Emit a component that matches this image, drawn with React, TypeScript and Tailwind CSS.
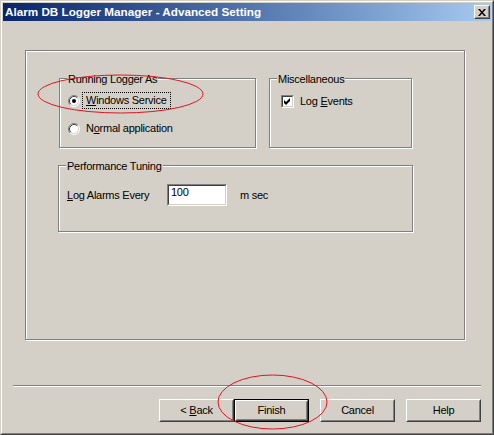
import React from 'react';

function Radio({ checked }: { checked?: boolean }) {
  return (
    <svg width="12" height="12" viewBox="0 0 12 12" className="shrink-0">
      <circle cx="6" cy="6" r="5" fill="#fff" />
      <path d="M2.11 9.89 A5.5 5.5 0 0 1 9.89 2.11" fill="none" stroke="#808080" />
      <path d="M9.89 2.11 A5.5 5.5 0 0 1 2.11 9.89" fill="none" stroke="#fff" />
      <path d="M2.82 9.18 A4.5 4.5 0 0 1 9.18 2.82" fill="none" stroke="#404040" />
      <path d="M9.18 2.82 A4.5 4.5 0 0 1 2.82 9.18" fill="none" stroke="#d4d0c8" />
      {checked && <circle cx="6" cy="6" r="2" fill="#000" />}
    </svg>
  );
}

function Checkbox() {
  return (
    <div className="w-[13px] h-[13px] shrink-0 border border-t-[#808080] border-l-[#808080] border-r-white border-b-white">
      <div className="h-full border border-t-[#404040] border-l-[#404040] border-r-[#d4d0c8] border-b-[#d4d0c8] bg-white">
        <svg width="9" height="9" viewBox="0 0 9 9">
          <polygon points="1,3 3,5 7,1 7,4 3,8 1,6" fill="#000" />
        </svg>
      </div>
    </div>
  );
}

function Group({ title, className, children }: { title: string; className: string; children?: React.ReactNode }) {
  return (
    <div className={`relative border border-[#808080] shadow-[inset_1px_1px_0_#fff,1px_1px_0_#fff] ${className}`}>
      <span className="absolute left-[7px] top-[-6px] px-px bg-[#d4d0c8] leading-[13px]">{title}</span>
      {children}
    </div>
  );
}

function Button({ children, isDefault }: { children: React.ReactNode; isDefault?: boolean }) {
  if (isDefault) {
    return (
      <div className="w-[75px] h-[23px] border border-black">
        <div className="h-full border border-t-white border-l-white border-r-[#404040] border-b-[#404040]">
          <div className="h-full flex items-center justify-center border border-t-[#d4d0c8] border-l-[#d4d0c8] border-r-[#808080] border-b-[#808080]">
            {children}
          </div>
        </div>
      </div>
    );
  }
  return (
    <div className="w-[75px] h-[23px] border border-t-white border-l-white border-r-[#404040] border-b-[#404040]">
      <div className="h-full flex items-center justify-center border border-t-[#d4d0c8] border-l-[#d4d0c8] border-r-[#808080] border-b-[#808080]">
        {children}
      </div>
    </div>
  );
}

export default function App() {
  return (
    <div className="relative w-[494px] h-[435px] bg-[#d4d0c8] text-black text-[11px] tracking-[-0.25px] font-['Liberation_Sans',Arial,sans-serif]">
      <div className="h-full border border-t-[#d4d0c8] border-l-[#d4d0c8] border-r-[#404040] border-b-[#404040]">
        <div className="h-full flex flex-col p-px border border-t-white border-l-white border-r-[#808080] border-b-[#808080]">
          {/* title bar */}
          <div className="h-[18px] flex items-center justify-between pl-[2px] pr-[1px] bg-linear-to-r from-[#0a246a] to-[#a6caf0]">
            <span className="text-white font-bold text-[11.7px] tracking-normal leading-none">
              Alarm DB Logger Manager - Advanced Setting
            </span>
            <div className="w-[16px] h-[14px] border border-t-white border-l-white border-r-[#404040] border-b-[#404040] bg-[#d4d0c8]">
              <div className="h-full flex items-center justify-center border border-t-[#d4d0c8] border-l-[#d4d0c8] border-r-[#808080] border-b-[#808080]">
                <svg width="8" height="7" viewBox="0 0 8 7">
                  <path d="M0 0h2l2 2.5L6 0h2L5 3.5 8 7H6L4 4.5 2 7H0l3-3.5z" fill="#000" />
                </svg>
              </div>
            </div>
          </div>

          {/* settings panel */}
          <div className="mt-[29px] ml-[22px] w-[440px] h-[290px] border border-[#808080] shadow-[inset_1px_1px_0_#fff,1px_1px_0_#fff] flex flex-col">
            <div className="mt-[27px] ml-[33px] flex">
              <Group title="Running Logger As" className="w-[197px] h-[70px]">
                <div className="pt-[13px] pl-[8px] flex flex-col">
                  <div className="flex items-center h-[17px]">
                    <Radio checked />
                    <span className="ml-[2px] h-[17px] px-[3px] leading-[15px] border border-dotted border-black">
                      <u>W</u>indows Service
                    </span>
                  </div>
                  <div className="flex items-center h-[17px] mt-[11px]">
                    <Radio />
                    <span className="ml-[2px] h-[17px] px-[3px] leading-[15px] border border-transparent">
                      N<u>o</u>rmal application
                    </span>
                  </div>
                </div>
              </Group>
              <Group title="Miscellaneous" className="ml-[13px] w-[143px] h-[70px]">
                <div className="pt-[16px] pl-[11px] flex items-center">
                  <Checkbox />
                  <span className="ml-[6px] leading-[13px]">
                    Log <u>E</u>vents
                  </span>
                </div>
              </Group>
            </div>

            <Group title="Performance Tuning" className="mt-[17px] ml-[32px] w-[355px] h-[67px]">
              <div className="pt-[18px] pl-[8px] flex items-center">
                <span className="w-[100px] leading-[13px]">
                  <u>L</u>og Alarms Every
                </span>
                <div className="w-[60px] h-[22px] border border-t-[#808080] border-l-[#808080] border-r-white border-b-white">
                  <div className="h-full pl-[2px] leading-[13px] bg-white border border-t-[#404040] border-l-[#404040] border-r-[#d4d0c8] border-b-[#d4d0c8]">
                    100
                  </div>
                </div>
                <span className="ml-[13px] leading-[13px]">m sec</span>
              </div>
            </Group>
          </div>

          {/* separator */}
          <div className="mt-[45px] ml-[10px] w-[468px] h-0 border-t border-t-[#808080] border-b border-b-white" />

          {/* buttons */}
          <div className="mt-[12px] ml-[156px] flex">
            <Button>
              <span>&lt;</span>
              <span className="ml-[3px]">
                <u>B</u>ack
              </span>
            </Button>
            <Button isDefault>Finish</Button>
            <div className="ml-[11px]">
              <Button>Cancel</Button>
            </div>
            <div className="ml-[11px]">
              <Button>Help</Button>
            </div>
          </div>
        </div>
      </div>

      {/* red annotation marks */}
      <svg className="absolute inset-0 pointer-events-none" width="494" height="435">
        <ellipse cx="120.5" cy="94" rx="82.5" ry="19" fill="none" stroke="#e0141e" strokeWidth="1" />
        <ellipse cx="272.5" cy="402" rx="54.5" ry="27" fill="none" stroke="#e0141e" strokeWidth="1" />
      </svg>
    </div>
  );
}
